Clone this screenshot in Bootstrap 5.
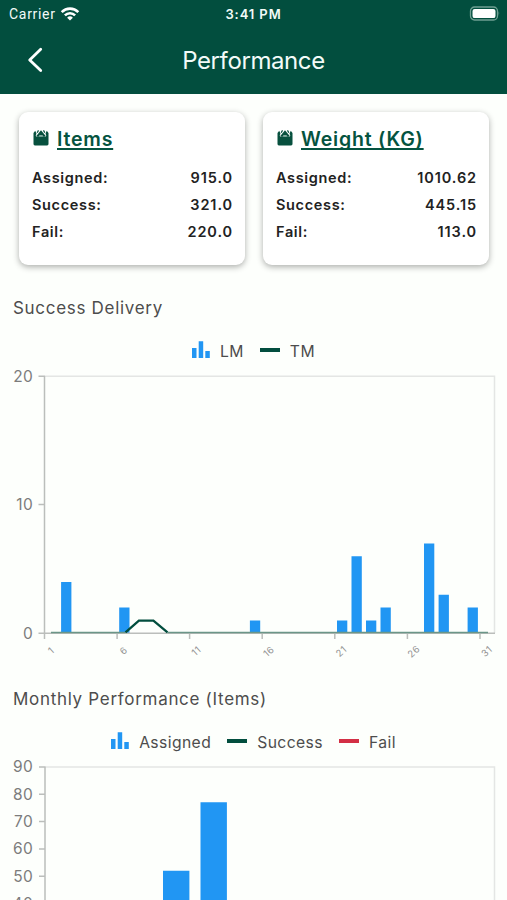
<!DOCTYPE html>
<html lang="en">
<head>
<meta charset="utf-8">
<meta name="viewport" content="width=device-width, initial-scale=1">
<title>Performance</title>
<link href="https://cdn.jsdelivr.net/npm/bootstrap@5.3.0/dist/css/bootstrap.min.css" rel="stylesheet">
<style>
  body { font-family: Inter, sans-serif; background: #fdfffc; color: #4d4d4d; height: 900px; }
  svg { display: block; flex: none; }
  .app-header { background: #024e3e; height: 94px; color: #f2fbf8; }
  .status-row { height: 27px; font-size: 14px; line-height: 28px; }
  .status-side { width: 200px; }
  .carrier { font-family: Roboto, sans-serif; letter-spacing: .7px; padding-left: 9px; }
  .clock { font-size: 13px; font-weight: 600; letter-spacing: .9px; }
  .title-row { height: 67px; }
  .title-side { width: 100px; }
  .page-title { font-size: 24px; font-weight: 400; letter-spacing: -.4px; line-height: 66px; }
  .cards-row { padding: 18px 18px 0 19px; gap: 18px; }
  .stat-card { border: 0; border-radius: 9px; height: 153px; background: #fff; padding: 13px 12px 0 13px; box-shadow: 0 2px 6px rgba(0,0,0,.32); }
  .stat-head { height: 26px; }
  .stat-title { font-size: 19.5px; font-weight: 600; line-height: 26px; padding-top: 2px; color: #055340; letter-spacing: .8px; text-decoration: underline; text-decoration-thickness: 2px; text-underline-offset: 2px; text-decoration-skip-ink: none; }
  .stat-list { padding-top: 5px; font-size: 14.5px; font-weight: 600; line-height: 27px; letter-spacing: .65px; color: #222; }
  .stat-list span + span { letter-spacing: .9px; }
  .section-title { font-size: 17px; font-weight: 400; letter-spacing: .7px; line-height: 24px; margin: 0 0 0 13px; }
  .chart-first { padding-top: 31px; }
  .chart-next { padding-top: 17px; }
  .legend-row { font-size: 15.7px; line-height: 20px; letter-spacing: .4px; gap: 16px; }
  .legend-row > div { gap: 10px; }
  .legend-row span { padding-top: 2px; margin-bottom: -2px; line-height: 20px; }
  .axis-label { font-size: 15.5px; fill: #7c7c7c; letter-spacing: .3px; text-anchor: end; }
  .tick-label { font-size: 9.5px; fill: #929292; letter-spacing: .5px; text-anchor: middle; }
</style>
</head>
<body class="overflow-hidden">
<header class="app-header">
  <div class="status-row d-flex justify-content-between">
    <div class="status-side carrier d-flex align-items-center"><span>Carrier</span>
      <svg class="ms-1" width="20" height="16" viewBox="0 0 20 16"><g fill="none" stroke="#fff" stroke-width="2.6"><path d="M1.7 6.1a11.7 11.7 0 0 1 16.6 0M4.9 9.3a7.2 7.2 0 0 1 10.2 0"/></g><path d="M7.1 11.7a4.2 4.2 0 0 1 5.8 0L10 14.6z" fill="#fff"/></svg>
    </div>
    <div class="clock text-center">3:41 PM</div>
    <div class="status-side d-flex justify-content-end align-items-center">
      <svg width="38" height="16" viewBox="0 0 38 16"><rect x="1.5" y="1" width="27" height="13" rx="4" fill="none" stroke="#6f9f92" stroke-width="1.3"/><rect x="3.5" y="2.900" width="23" height="9.200" rx="2.200" fill="#fff"/><path d="M29.600 5.300q1.700 2.200 0 4.400z" fill="#6f9f92"/></svg>
    </div>
  </div>
  <div class="title-row d-flex align-items-center justify-content-between">
    <div class="title-side ps-4"><svg width="22" height="28" viewBox="0 0 22 28"><path d="M16.700 2.200 5.700 12.900l11 10.700" fill="none" stroke="#fff" stroke-width="2.800" stroke-linecap="round" stroke-linejoin="round"/></svg></div>
    <h1 class="page-title m-0">Performance</h1>
    <div class="title-side"></div>
  </div>
</header>
<main>
  <div class="cards-row d-flex">
    <section class="card stat-card flex-fill w-50">
      <div class="stat-head d-flex align-items-center mb-2"><svg class="me-2" width="17" height="18" viewBox="0 0 17 18"><use href="#scale"/></svg><span class="stat-title">Items</span></div>
      <div class="stat-list">
        <div class="d-flex justify-content-between"><span>Assigned:</span><span>915.0</span></div>
        <div class="d-flex justify-content-between"><span>Success:</span><span>321.0</span></div>
        <div class="d-flex justify-content-between"><span>Fail:</span><span>220.0</span></div>
      </div>
    </section>
    <section class="card stat-card flex-fill w-50">
      <div class="stat-head d-flex align-items-center mb-2"><svg class="me-2" width="17" height="18" viewBox="0 0 17 18"><g id="scale"><path d="M3.200 1.800 1.500 4v11q0 1.400 1.400 1.400h12.200q1.400 0 1.400-1.400V4l-1.700-2.200-1.300 2.700.8 2.200-1.100 1.100H4.800L3.700 6.700l.8-2.200z" fill="#07503e"/><path d="M4.900 7.800V6.200L9 1.300l4.100 4.900v1.600z" fill="#07503e"/><path d="m5.200 3.700 1.300-2.300M12.800 3.700l-1.300-2.300" stroke="#07503e" stroke-width="1.200"/><path d="M7.200 6.900h3.600" stroke="#b8d5cc" stroke-width="1.200"/></g></svg><span class="stat-title">Weight (KG)</span></div>
      <div class="stat-list">
        <div class="d-flex justify-content-between"><span>Assigned:</span><span>1010.62</span></div>
        <div class="d-flex justify-content-between"><span>Success:</span><span>445.15</span></div>
        <div class="d-flex justify-content-between"><span>Fail:</span><span>113.0</span></div>
      </div>
    </section>
  </div>

  <section class="chart-first">
    <h2 class="section-title">Success Delivery</h2>
    <div class="legend-row d-flex justify-content-center align-items-center mt-3 pt-1">
      <div class="d-flex align-items-center">
        <svg width="18" height="20" viewBox="0 0 18 20"><path d="M0 8h4.500v10H0zM6.700 1.200h4.500V18H6.700zM13.300 11h4.500v7h-4.500z" fill="#2196f3"/></svg>
        <span>LM</span>
      </div>
      <div class="d-flex align-items-center">
        <svg width="20" height="4"><rect width="20" height="4" fill="#024e3e"/></svg>
        <span>TM</span>
      </div>
    </div>
    <svg width="507" height="310" viewBox="0 360 507 310">
      <path d="M45 376.200H494.500V633" fill="none" stroke="#e4e6e4" stroke-width="1.500"/>
      <path d="M61.100 581.900h10.300V633H61.100zM119.200 607.600h10.300V633h-10.300zM249.900 620.500h10.300V633h-10.300zM337 620.500h10.300V633H337zM351.500 556.200h10.300V633h-10.300zM366 620.500h10.300V633H366zM380.500 607.600h10.300V633h-10.300zM424 543.400h10.300V633H424zM438.600 594.800h10.300V633h-10.300zM467.600 607.600h10.300V633h-10.300z" fill="#2196f3"/>
      <path d="M44.500 376V639M38.500 376.200H45M38.500 504.600H45M38.500 633.300H495M117.100 633v6M189.600 633v6M262.200 633v6M334.800 633v6M407.400 633v6M480 633v6" fill="none" stroke="#bbbebb" stroke-width="1.500"/>
      <path d="M51 632.500H125.500M167.500 632.500H488" fill="none" stroke="#6b9688" stroke-width="1.700"/>
      <path d="M125.500 632.400 138.900 620.600H153.400L167.500 632.400" fill="none" stroke="#024e3e" stroke-width="2.300"/>
      <text class="axis-label" x="33" y="381.500">20</text>
      <text class="axis-label" x="33" y="510">10</text>
      <text class="axis-label" x="33" y="638.800">0</text>
      <text class="tick-label" transform="translate(53.500 653) rotate(-42)">1</text>
      <text class="tick-label" transform="translate(126 653) rotate(-42)">6</text>
      <text class="tick-label" transform="translate(198.500 653.500) rotate(-42)">11</text>
      <text class="tick-label" transform="translate(271 654) rotate(-42)">16</text>
      <text class="tick-label" transform="translate(343.500 654) rotate(-42)">21</text>
      <text class="tick-label" transform="translate(416 654) rotate(-42)">26</text>
      <text class="tick-label" transform="translate(489 654) rotate(-42)">31</text>
    </svg>
  </section>

  <section class="chart-next">
    <h2 class="section-title">Monthly Performance (Items)</h2>
    <div class="legend-row d-flex justify-content-center align-items-center mt-3 pt-1">
      <div class="d-flex align-items-center">
        <svg width="18" height="20" viewBox="0 0 18 20"><path d="M0 8h4.500v10H0zM6.700 1.200h4.500V18H6.700zM13.300 11h4.500v7h-4.500z" fill="#2196f3"/></svg>
        <span>Assigned</span>
      </div>
      <div class="d-flex align-items-center">
        <svg width="20" height="4"><rect width="20" height="4" fill="#024e3e"/></svg>
        <span>Success</span>
      </div>
      <div class="d-flex align-items-center">
        <svg width="20" height="4"><rect width="20" height="4" fill="#d32f45"/></svg>
        <span>Fail</span>
      </div>
    </div>
    <svg width="507" height="149" viewBox="0 751 507 149">
      <path d="M45 767H494.500V901" fill="none" stroke="#e4e6e4" stroke-width="1.500"/>
      <path d="M163 870.700h26.400V901H163zM200.500 802.300h26.400V901h-26.400z" fill="#2196f3"/>
      <path d="M45 766.500V901M39 767h6M39 794.200h6M39 821.500h6M39 848.900h6M39 876.200h6" fill="none" stroke="#bbbebb" stroke-width="1.500"/>
      <g class="axis-label">
        <text x="33" y="772.300">90</text><text x="33" y="799.600">80</text><text x="33" y="827">70</text><text x="33" y="854.300">60</text><text x="33" y="881.600">50</text><text x="33" y="909">40</text>
      </g>
    </svg>
  </section>
</main>
<script src="https://cdn.jsdelivr.net/npm/bootstrap@5.3.0/dist/js/bootstrap.bundle.min.js"></script>
</body>
</html>
